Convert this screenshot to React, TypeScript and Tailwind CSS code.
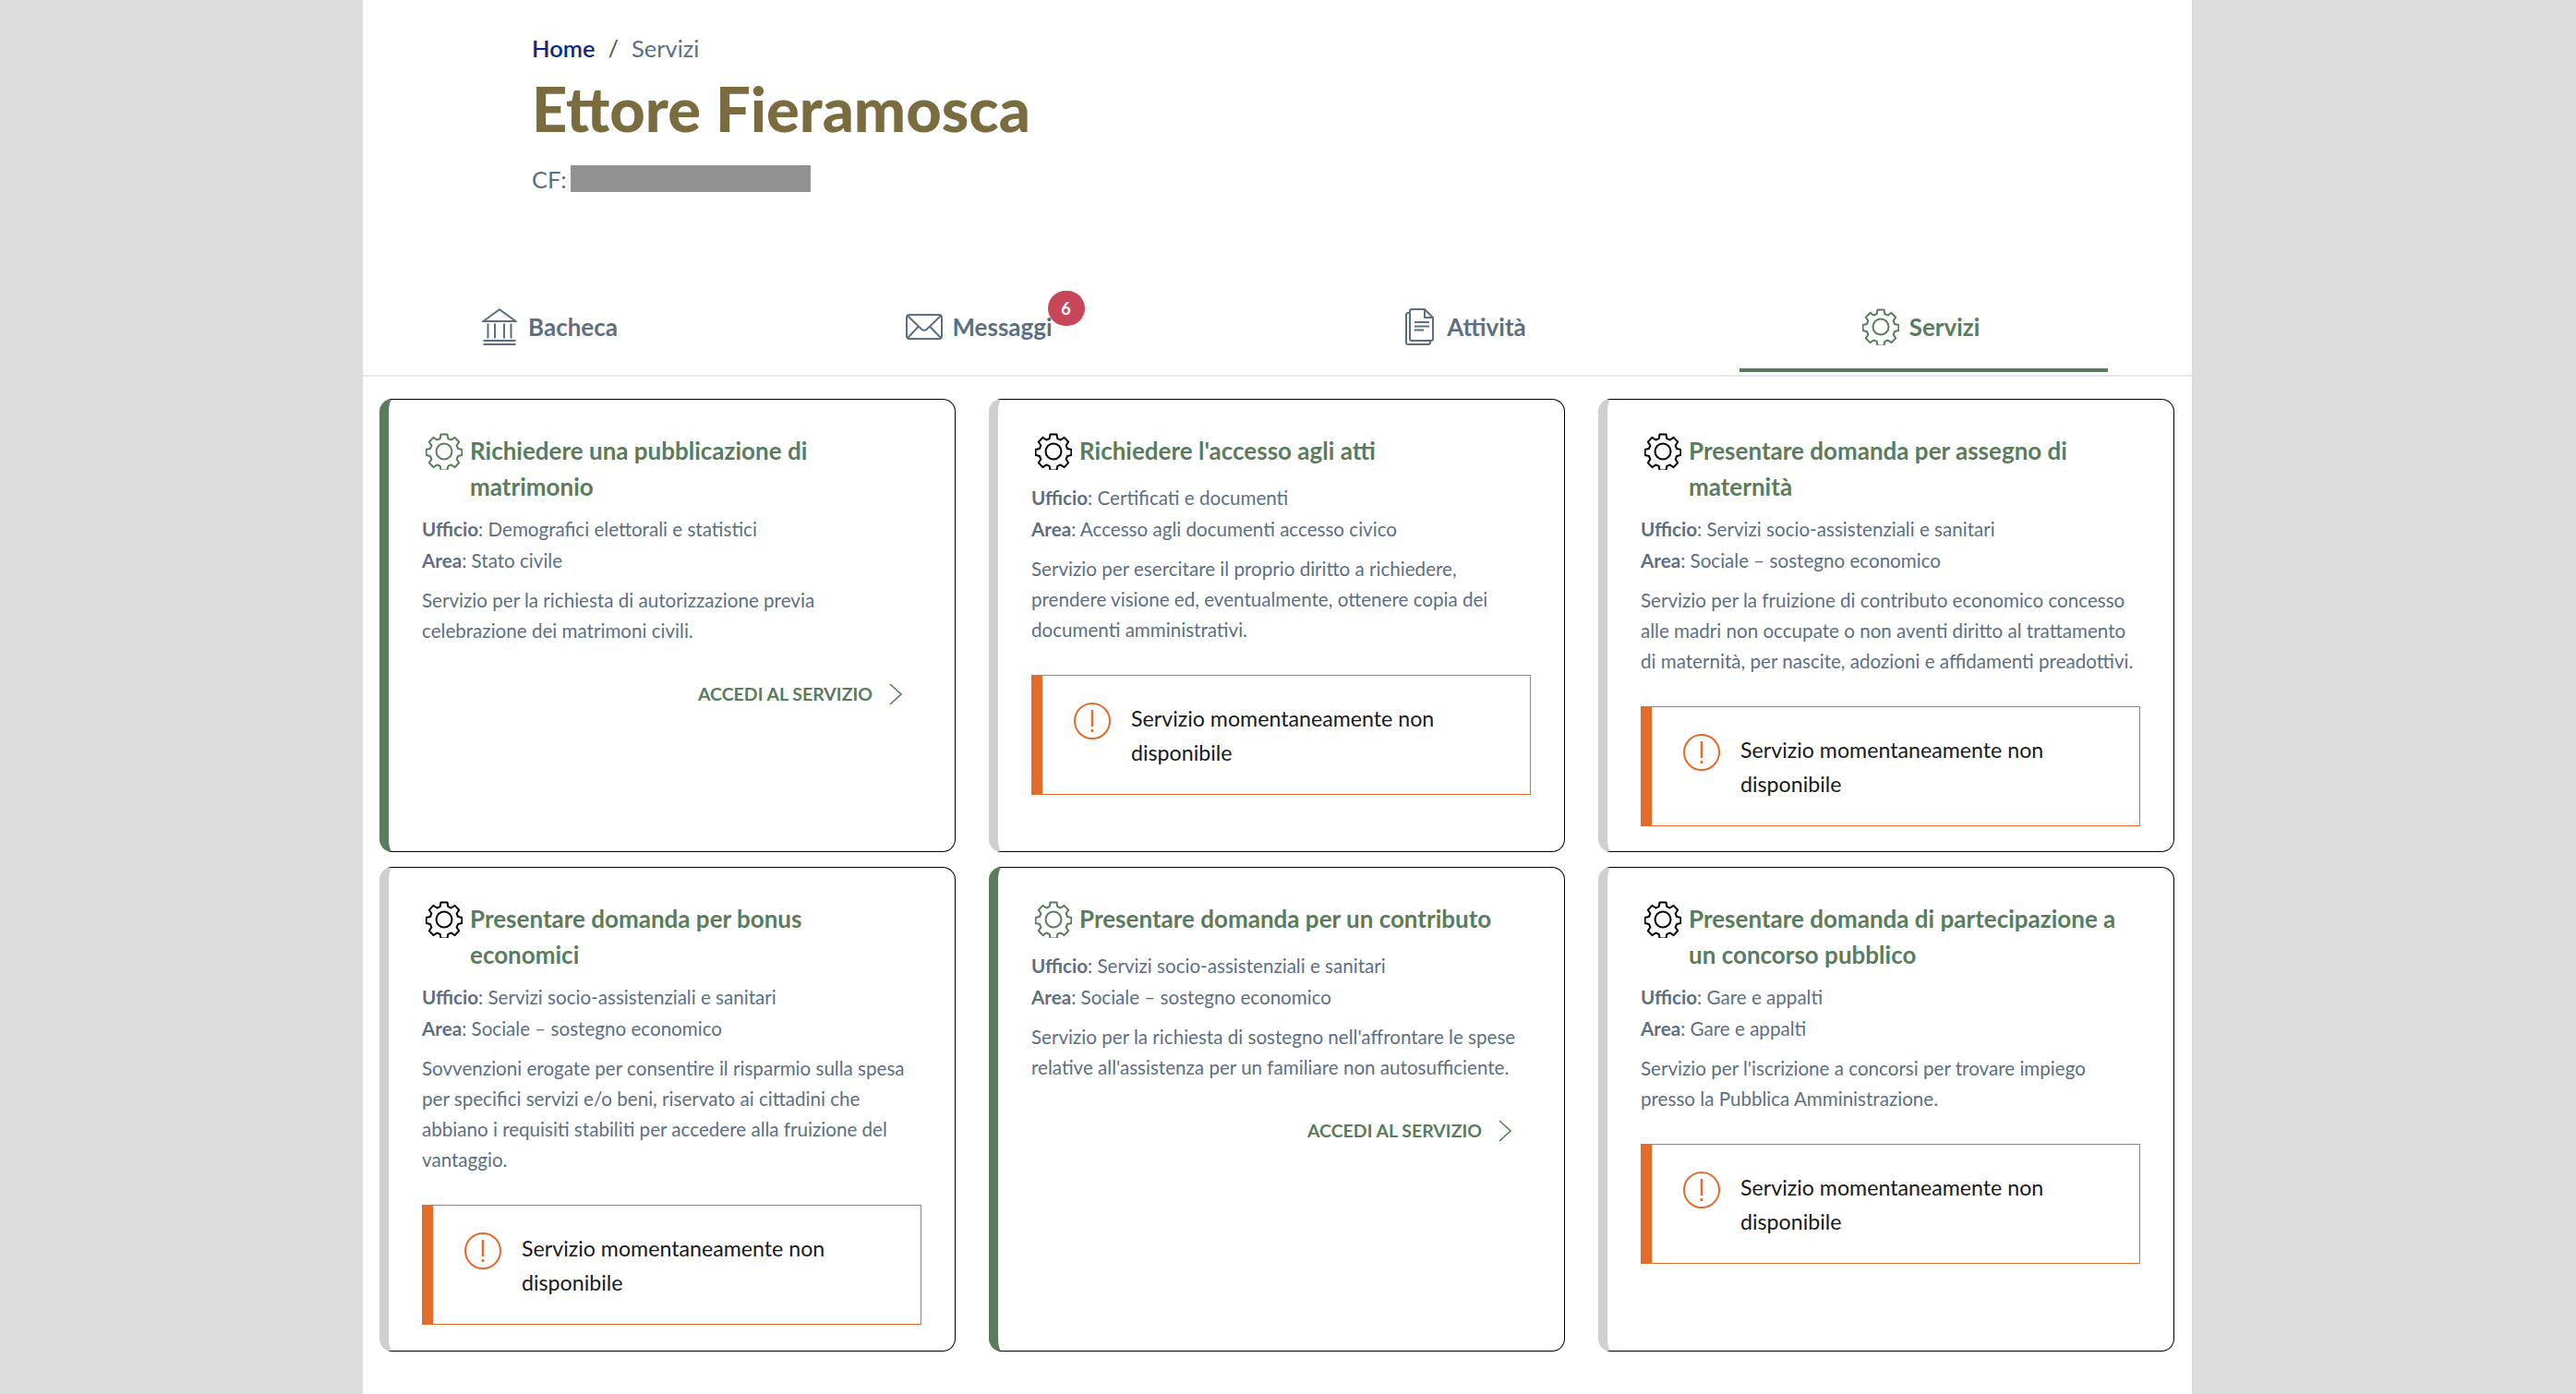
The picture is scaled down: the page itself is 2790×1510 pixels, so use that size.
const font = "font-['Lato','Liberation_Sans',sans-serif]";

const Gear = ({ className }: { className: string }) => (
  <svg viewBox="0 0 40 40" fill="none" stroke="currentColor" strokeWidth="2" strokeLinejoin="round" className={className}>
    <circle cx="20" cy="20" r="8.5" />
    <path d="M16.500 1.500h7l.8 4.600 3.400 1.400 3.900-2.600 4.600 4.800-2.600 3.800 1.500 3.500 4.300.9v6.200l-4.300.9-1.500 3.500 2.600 3.800-4.600 4.800-3.900-2.600-3.400 1.400-.8 4.600h-7l-.8-4.600-3.400-1.400-3.900 2.600-4.600-4.800 2.600-3.800-1.500-3.500-4.300-.9v-6.200l4.300-.9 1.500-3.500-2.600-3.800 4.600-4.800 3.900 2.600 3.400-1.400z" />
  </svg>
);

const Bank = () => (
  <svg viewBox="0 0 38 40" fill="none" stroke="#5c6f82" strokeWidth="2" className="w-[38px] h-10 mr-3">
    <path d="M1.500 14 19 1.200 36.500 14zM6.500 16.500v16M14 16.500v16M24 16.500v16M31.500 16.500v16M1.500 35h35M1.500 39h35" />
  </svg>
);

const Mail = () => (
  <svg viewBox="0 0 40 28" fill="none" stroke="#5c6f82" strokeWidth="2" strokeLinejoin="round" className="w-10 h-7 mr-2.5">
    <rect x="1" y="1" width="38" height="26" rx="3" />
    <path d="M2 2l15 14.500q3 2.500 6 0L38 2M2 26l11.500-12M38 26 26.500 14" />
  </svg>
);

const Doc = () => (
  <svg viewBox="0 0 31 40" fill="none" stroke="#5c6f82" strokeWidth="2" strokeLinejoin="round" className="w-[31px] h-10 mr-3.5">
    <path d="M5 33V3a2 2 0 0 1 2-2h14l9 9v23a2 2 0 0 1-2 2H7a2 2 0 0 1-2-2zM21 1v9h9" />
    <path d="M5 5H3a2 2 0 0 0-2 2v30a2 2 0 0 0 2 2h22a2 2 0 0 0 2-2v-2M10 15h16M10 19.500h16M10 23.500h10" />
  </svg>
);

const Alert = () => (
  <div className="flex h-[130px] border border-[#e36c2b] border-l-[12px] mt-[32px] pl-[34px] pt-[29px]">
    <svg viewBox="0 0 40 40" fill="none" stroke="#e36c2b" strokeWidth="2" className="w-10 h-10 shrink-0 mr-[22px]">
      <circle cx="20" cy="20" r="19" />
      <path d="M20 8v18M20 29v3" strokeWidth="2.500" />
    </svg>
    <p className="text-[23.2px] leading-[37px] text-[#19191a] -mt-[1px]">Servizio momentaneamente non<br />disponibile</p>
  </div>
);

type Service = { title: string[]; ufficio: string; area: string; desc: string[]; open: boolean };

const services: Service[] = [
  { title: ["Richiedere una pubblicazione di", "matrimonio"], ufficio: "Demografici elettorali e statistici", area: "Stato civile", desc: ["Servizio per la richiesta di autorizzazione previa", "celebrazione dei matrimoni civili."], open: true },
  { title: ["Richiedere l'accesso agli atti"], ufficio: "Certificati e documenti", area: "Accesso agli documenti accesso civico", desc: ["Servizio per esercitare il proprio diritto a richiedere,", "prendere visione ed, eventualmente, ottenere copia dei", "documenti amministrativi."], open: false },
  { title: ["Presentare domanda per assegno di", "maternità"], ufficio: "Servizi socio-assistenziali e sanitari", area: "Sociale – sostegno economico", desc: ["Servizio per la fruizione di contributo economico concesso", "alle madri non occupate o non aventi diritto al trattamento", "di maternità, per nascite, adozioni e affidamenti preadottivi."], open: false },
  { title: ["Presentare domanda per bonus", "economici"], ufficio: "Servizi socio-assistenziali e sanitari", area: "Sociale – sostegno economico", desc: ["Sovvenzioni erogate per consentire il risparmio sulla spesa", "per specifici servizi e/o beni, riservato ai cittadini che", "abbiano i requisiti stabiliti per accedere alla fruizione del", "vantaggio."], open: false },
  { title: ["Presentare domanda per un contributo"], ufficio: "Servizi socio-assistenziali e sanitari", area: "Sociale – sostegno economico", desc: ["Servizio per la richiesta di sostegno nell'affrontare le spese", "relative all'assistenza per un familiare non autosufficiente."], open: true },
  { title: ["Presentare domanda di partecipazione a", "un concorso pubblico"], ufficio: "Gare e appalti", area: "Gare e appalti", desc: ["Servizio per l'iscrizione a concorsi per trovare impiego", "presso la Pubblica Amministrazione."], open: false },
];

const Card = ({ s }: { s: Service }) => (
  <div className={`border border-black rounded-[14px] border-l-[10px] pl-9 pr-[36px] pt-9 ${s.open ? "border-l-[#5a7c5c]" : "border-l-[#cfcfcf]"}`}>
    <div className="flex items-start">
      <Gear className={`w-10 h-10 shrink-0 ml-1 mr-2 ${s.open ? "text-[#5a7c5c]" : "text-black"}`} />
      <h3 className="text-[26px] leading-[39px] font-bold text-[#5a7c5c] whitespace-nowrap">
        {s.title.map((t) => <div key={t}>{t}</div>)}
      </h3>
    </div>
    <div className={`text-[20.6px] leading-[34px] text-[#5c6f82] whitespace-nowrap ${s.title.length > 1 ? "mt-[9px]" : "mt-[13px]"}`}>
      <div><b className="font-bold">Ufficio</b>: {s.ufficio}</div>
      <div><b className="font-bold">Area</b>: {s.area}</div>
    </div>
    <p className="text-[20.6px] leading-[33px] text-[#5c6f82] mt-[10px] whitespace-nowrap">
      {s.desc.map((d) => <span key={d} className="block">{d}</span>)}
    </p>
    {s.open ? (
      <a className="flex items-center justify-end mt-[37px] pr-[21px] text-[19.5px] font-bold text-[#5a7c5c] leading-[30px]">
        ACCEDI AL SERVIZIO
        <svg viewBox="0 0 14 24" fill="none" stroke="#5a7c5c" strokeWidth="1.600" className="w-3.5 h-6 ml-[18px]"><path d="M1 1l12 11L1 23" /></svg>
      </a>
    ) : <Alert />}
  </div>
);

const Tab = ({ icon, label, active, ml }: { icon: React.ReactNode; label: string; active?: boolean; ml: string }) => (
  <div className={`w-[399px] h-[70px] flex items-start justify-center pt-[1px] ${ml} ${active ? "border-b-4 border-[#5a7c5c]" : ""}`}>
    <div className="relative flex items-center h-10">
      {icon}
      <span className={`text-[26px] font-bold ${active ? "text-[#5a7c5c]" : "text-[#5c6f82]"}`}>{label}</span>
      {label === "Messaggi" && (
        <span className="absolute -right-[35px] -top-[19px] w-10 h-[38px] rounded-full bg-[#c8465a] text-white text-[18px] font-bold flex items-center justify-center">6</span>
      )}
    </div>
  </div>
);

export default function App() {
  return (
    <div className={`min-h-[1510px] bg-[#dcdcdc] ${font}`}>
      <div className="ml-[393px] w-[1981px] h-[1510px] bg-white overflow-hidden">
        <div className="pl-[183px] pt-[35px]">
          <div className="text-[25.5px] leading-[34px] flex">
            <span className="text-[#0a2a78] font-semibold">Home</span>
            <span className="text-[#555] mx-3.5">/</span>
            <span className="text-[#5c6f82]">Servizi</span>
          </div>
          <h1 className="text-[66.800px] leading-[80px] font-black text-[#7a6c3e] mt-[8px]">Ettore Fieramosca</h1>
          <div className="flex items-center mt-[22px] h-[29px]">
            <span className="text-[25.5px] text-[#5c6f82] mr-1 pt-[2px]">CF:</span>
            <span className="w-[260px] h-[29px] bg-[#929292]" />
          </div>
        </div>
        <div className="flex mt-[125px] pl-[3px] border-b-2 border-[#e6e6ee] h-[75px] pb-[3px]">
          <Tab icon={<Bank />} label="Bacheca" ml="" />
          <Tab icon={<Mail />} label="Messaggi" ml="ml-[66px]" />
          <Tab icon={<Doc />} label="Attività" ml="ml-[128px]" />
          <Tab icon={<Gear className="w-10 h-10 mr-[11px] text-[#5a7c5c]" />} label="Servizi" active ml="ml-[97px] pr-[6px]" />
        </div>
        <div className="grid grid-cols-[624px_624px_624px] grid-rows-[491px_525px] gap-x-9 gap-y-4 ml-[18px] mt-[24px]">
          {services.map((s) => <Card key={s.title[0]} s={s} />)}
        </div>
      </div>
    </div>
  );
}
